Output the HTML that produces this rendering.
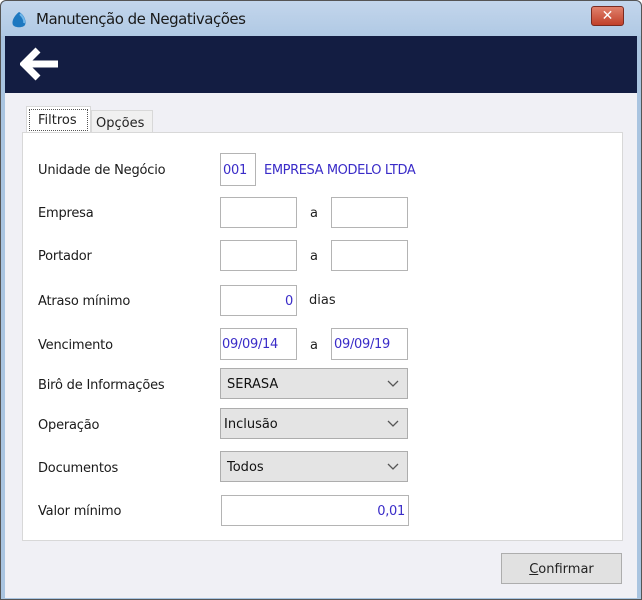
<!DOCTYPE html>
<html><head><meta charset="utf-8"><style>
*{margin:0;padding:0;box-sizing:border-box}
body{width:642px;height:600px;overflow:hidden;font-family:"DejaVu Sans","Liberation Sans",sans-serif;font-size:13px;color:#222;background:#fff}
.win{position:absolute;left:0;top:0;width:642px;height:600px;background:#a9c4e0;box-shadow:inset 0 0 0 1px #555;border-radius:6px 6px 0 0}
.title{position:absolute;left:1px;top:1px;width:640px;height:35px;background:linear-gradient(#c3d6ec,#b0c9e4);border-radius:6px 6px 0 0}
.title span{position:absolute;left:35px;top:9px;font-size:15px;color:#1a1a1a;font-family:"DejaVu Sans",sans-serif;letter-spacing:-0.5px}
.close{position:absolute;left:590px;top:5px;width:33px;height:20px;background:linear-gradient(#e0816c,#c1402a);border:1px solid #7a2a20;border-radius:3px;color:#fff;text-align:center;font-weight:bold;font-size:14px;line-height:18px}
.band{position:absolute;left:5px;top:36px;width:632px;height:57px;background:#131d42}
.client{position:absolute;left:5px;top:93px;width:632px;height:505px;background:#f0f0f5}
.panel{position:absolute;left:22px;top:132px;width:601px;height:409px;background:#fff;border:1px solid #d8d8d8}
.lbl{position:absolute;left:38px;font-size:13px;color:#1a1a1a;letter-spacing:-0.2px}
.box{position:absolute;background:#fff;border:1px solid #b4b4b4;color:#3a2cc8;font-size:13px;line-height:31px;padding:0 3px;letter-spacing:-0.3px}
.sel{position:absolute;left:220px;width:188px;height:31px;background:#e4e4e4;border:1px solid #adadad;font-size:13px;line-height:31px;padding-left:6px;color:#111}
.sel svg{position:absolute;right:8px;top:11px}
.a{position:absolute;left:310px;font-size:13px}
</style></head><body>
<div class="win">
<div class="title">
<svg style="position:absolute;left:9px;top:10px" width="18" height="18" viewBox="0 0 18 18"><path d="M9 1C13 3 17 9 15 14C13 17 5 17 3 14C1 10 5 4 9 1Z" fill="#1e78c0"/><path d="M10 3C13 6 15 9 14 12" stroke="#6fb6ea" stroke-width="2" fill="none"/></svg>
<span>Manutenção de Negativações</span>
<div class="close">✕</div>
</div>
<div class="band"><svg style="position:absolute;left:15px;top:11px" width="42" height="34" viewBox="0 0 42 34"><path d="M18 3L4 17L18 31M4 17H38" stroke="#fff" stroke-width="7" fill="none" stroke-linejoin="miter"/></svg></div>
<div class="client"></div>
<div style="position:absolute;left:26px;top:106px;width:65px;height:27px;background:#fff;border:1px solid #d8d8d8;border-bottom:none"><div style="position:absolute;left:2px;top:2px;width:59px;height:22px;border:1px dotted #555;font-size:13px;padding-left:8px;line-height:22px">Filtros</div></div>
<div style="position:absolute;left:91px;top:110px;width:62px;height:23px;background:#f0f0f0;border:1px solid #d8d8d8;border-bottom:none;font-size:13px;padding-left:4px;line-height:26px">Opções</div>
<div class="panel"></div>
<div class="lbl" style="top:163px">Unidade de Negócio</div>
<div class="box" style="left:220px;top:153px;width:36px;height:33px;line-height:34px;padding:0 2px">001</div>
<div style="position:absolute;left:264px;top:163px;color:#3a2cc8;font-size:13px;letter-spacing:-0.4px">EMPRESA MODELO LTDA</div>
<div class="lbl" style="top:206px">Empresa</div>
<div class="box" style="left:220px;top:197px;width:77px;height:31px"></div><div class="a" style="top:206px">a</div><div class="box" style="left:331px;top:197px;width:77px;height:31px"></div>
<div class="lbl" style="top:249px">Portador</div>
<div class="box" style="left:220px;top:240px;width:77px;height:31px"></div><div class="a" style="top:249px">a</div><div class="box" style="left:331px;top:240px;width:77px;height:31px"></div>
<div class="lbl" style="top:294px">Atraso mínimo</div>
<div class="box" style="left:220px;top:285px;width:77px;height:31px;text-align:right">0</div><div style="position:absolute;left:309px;top:293px;font-size:13px">dias</div>
<div class="lbl" style="top:338px">Vencimento</div>
<div class="box" style="left:220px;top:328px;width:77px;height:32px;padding:0 1px">09/09/14</div><div class="a" style="top:338px">a</div><div class="box" style="left:331px;top:328px;width:77px;height:32px;padding:0 2px">09/09/19</div>
<div class="lbl" style="top:378px">Birô de Informações</div>
<div class="sel" style="top:368px">SERASA<svg width="12" height="8"><path d="M1 1L6 6L11 1" stroke="#555" stroke-width="1.3" fill="none"/></svg></div>
<div class="lbl" style="top:418px">Operação</div>
<div class="sel" style="top:408px;padding-left:3px">Inclusão<svg width="12" height="8"><path d="M1 1L6 6L11 1" stroke="#555" stroke-width="1.3" fill="none"/></svg></div>
<div class="lbl" style="top:461px">Documentos</div>
<div class="sel" style="top:451px">Todos<svg width="12" height="8"><path d="M1 1L6 6L11 1" stroke="#555" stroke-width="1.3" fill="none"/></svg></div>
<div class="lbl" style="top:504px">Valor mínimo</div>
<div class="box" style="left:221px;top:495px;width:188px;height:31px;text-align:right">0,01</div>
<div style="position:absolute;left:501px;top:553px;width:121px;height:31px;background:#e1e1e1;border:1px solid #adadad;text-align:center;line-height:31px;font-size:13px"><u>C</u>onfirmar</div>
</div>
</body></html>
